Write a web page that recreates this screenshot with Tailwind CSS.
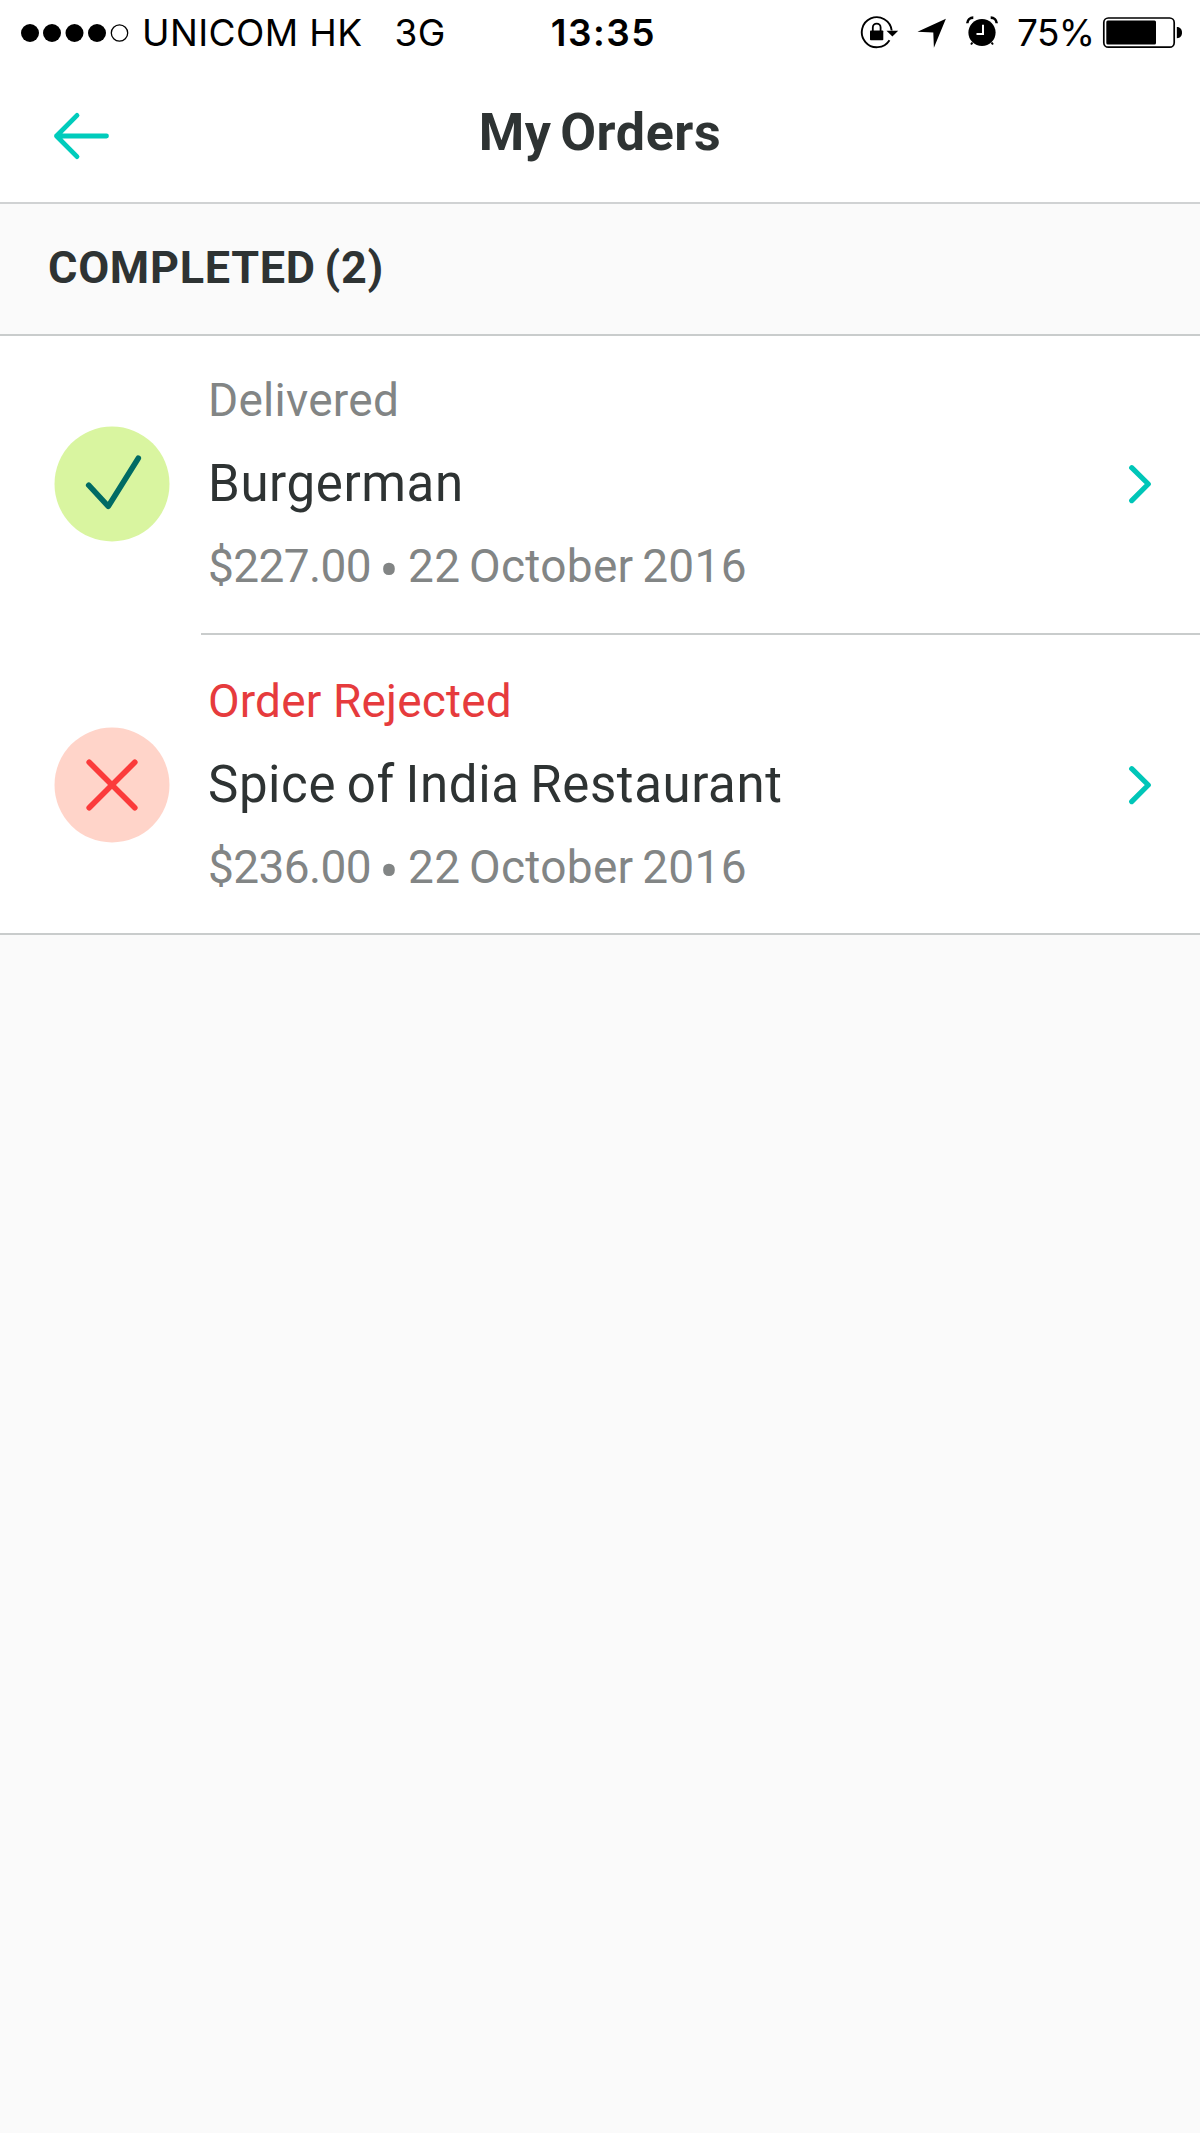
<!DOCTYPE html>
<html lang="en">
<head>
<meta charset="utf-8">
<title>My Orders</title>
<script src="https://cdn.jsdelivr.net/npm/@tailwindcss/browser@4"></script>
</head>
<body class="bg-[#fafafa] font-['Roboto',sans-serif] text-[#2e3333]">
<main class="flex h-[2133px] w-[1200px] flex-col overflow-hidden whitespace-nowrap">
  <header class="h-[204px] shrink-0 border-b-2 border-[#d0d2d3] bg-white">
    <!-- Status bar -->
    <div class="grid h-[66px] grid-cols-[1fr_120px_1fr] items-center pl-[21px] pr-[17px] font-['Inter',sans-serif] text-[37px] leading-[66px] text-black">
      <div class="flex items-center">
        <svg class="h-[18px] w-[108px] shrink-0" viewBox="0 0 108 18"><circle cx="9" cy="9" r="9"/><circle cx="31" cy="9" r="9"/><circle cx="53.500" cy="9" r="9"/><circle cx="76" cy="9" r="9"/><circle cx="98.500" cy="9" r="8.200" fill="none" stroke="#000" stroke-width="1.300"/></svg>
        <span class="ml-[13px] tracking-[0.4px]">UNICOM HK</span>
        <span class="ml-8 tracking-[0.4px]">3G</span>
      </div>
      <div class="pl-[3px] text-center font-semibold tracking-[1.5px]">13:35</div>
      <div class="flex items-center justify-end">
        <svg class="h-9 w-10 shrink-0" viewBox="861 15 40 36"><path d="M890.500 40.200A15 15 0 1 1 892.700 30.500" fill="none" stroke="#000" stroke-width="1.900"/><path d="M887.500 30.700h11.700l-5.800 5.700z"/><rect x="871" y="30.500" width="13.300" height="9.700" rx="0.800"/><path d="M873.800 31v-3.500a3.900 3.900 0 0 1 7.800 0V31" fill="none" stroke="#000" stroke-width="1.800"/></svg>
        <svg class="ml-4 h-9 w-8 shrink-0" viewBox="917 15 32 36"><path d="M946.900 18.800 918.500 31.700l15.800.7.600 15.300z"/></svg>
        <svg class="ml-[18px] h-9 w-8 shrink-0" viewBox="967 15 32 36"><circle cx="983" cy="32.500" r="13.600"/><path d="M984 24.800v9.300h-6.500" fill="none" stroke="#fff" stroke-width="2"/><path d="M968.300 23.300a6 6 0 0 1 6-5.700M997.700 23.300a6 6 0 0 0-6-5.700" fill="none" stroke="#000" stroke-width="2.600"/><path d="M973.500 42.500l-1.500 2M992.500 42.500l1.500 2" stroke="#000" stroke-width="2"/></svg>
        <span class="ml-[19px] w-[85px] tracking-[-0.6px]">75%</span>
        <svg class="h-9 w-[81px] shrink-0" viewBox="1102 15 81 36"><rect x="1103.800" y="18" width="70.400" height="29.200" rx="4.500" fill="none" stroke="#000" stroke-width="1.700"/><rect x="1106.300" y="20.600" width="49.700" height="24" rx="1.500"/><path d="M1176.800 27c3.600 0 5.200 2.500 5.200 5.600s-1.600 5.600-5.200 5.600z"/></svg>
      </div>
    </div>
    <!-- Navigation bar -->
    <div class="grid h-[134px] grid-cols-[200px_1fr_200px] items-center">
      <svg class="ml-[51px] mt-[5px] h-[50px] w-[60px]" viewBox="0 0 60 50" fill="none" stroke="#00ccbc" stroke-width="4.800" stroke-linecap="round" stroke-linejoin="round"><path d="M55.500 25H5.500M26 4.400 5.500 25 26 45.600"/></svg>
      <h1 class="pb-px text-center text-[52px] font-bold tracking-[0.6px] [word-spacing:-5px]">My Orders</h1>
    </div>
  </header>

  <h2 class="flex h-[132px] shrink-0 items-center border-b-2 border-[#c9cccc] pb-[3px] pl-[48px] text-[45px] font-bold tracking-[0.7px] [word-spacing:-3px]">COMPLETED (2)</h2>

  <section class="shrink-0 bg-white">
    <article class="flex h-[299px]">
      <div class="flex w-[201px] shrink-0 items-center pb-[3px] pl-[54px]">
        <svg class="h-[116px] w-[116px]" viewBox="0 0 116 116"><circle cx="58" cy="58" r="57.500" fill="#d9f5a0"/><path d="M34.700 59.200 54.300 80.300 84.300 32.200" fill="none" stroke="#006b64" stroke-width="5.600" stroke-linecap="round" stroke-linejoin="round"/></svg>
      </div>
      <div class="flex flex-1 items-center justify-between border-b-2 border-[#c9cccc] pb-[2px] pl-[7px] pr-[48px]">
        <div class="leading-[83px]">
          <p class="text-[46px] tracking-[0.25px] text-[#828585]">Delivered</p>
          <h3 class="text-[51px] tracking-[0.6px]">Burgerman</h3>
          <p class="grid h-[83px] grid-cols-[165px_35px_auto] text-[46px] text-[#828585]"><span class="tracking-[-0.6px]">$227.00</span><span class="translate-y-[4px] pr-[3px] text-center text-[58px]">•</span><span class="tracking-[0.3px] [word-spacing:-3px]">22 October 2016</span></p>
        </div>
        <svg class="h-10 w-6" viewBox="0 0 24 40" fill="none" stroke="#00c6b8" stroke-width="5.200" stroke-linecap="round" stroke-linejoin="round"><path d="M3.700 3.700 20.300 20 3.700 36.600"/></svg>
      </div>
    </article>
    <article class="flex h-[300px] border-b-2 border-[#c9cccc]">
      <div class="flex w-[201px] shrink-0 items-center pl-[54px] pt-[2px]">
        <svg class="h-[116px] w-[116px]" viewBox="0 0 116 116"><circle cx="58" cy="58" r="57.500" fill="#ffd4c9"/><path d="M35.200 35.200 80.800 80.800M80.800 35.200 35.200 80.800" fill="none" stroke="#fb3b3b" stroke-width="5.600" stroke-linecap="round"/></svg>
      </div>
      <div class="flex flex-1 items-center justify-between pl-[7px] pr-[48px]">
        <div class="leading-[83px]">
          <p class="text-[46px] tracking-[0.15px] text-[#e63b3d]">Order Rejected</p>
          <h3 class="text-[51px] tracking-[0.6px] [word-spacing:-2.5px]">Spice of India Restaurant</h3>
          <p class="grid h-[83px] grid-cols-[165px_35px_auto] text-[46px] text-[#828585]"><span class="tracking-[-0.6px]">$236.00</span><span class="translate-y-[4px] pr-[3px] text-center text-[58px]">•</span><span class="tracking-[0.3px] [word-spacing:-3px]">22 October 2016</span></p>
        </div>
        <svg class="mt-[2px] h-10 w-6" viewBox="0 0 24 40" fill="none" stroke="#00c6b8" stroke-width="5.200" stroke-linecap="round" stroke-linejoin="round"><path d="M3.700 3.700 20.300 20 3.700 36.600"/></svg>
      </div>
    </article>
  </section>
</main>
</body>
</html>
